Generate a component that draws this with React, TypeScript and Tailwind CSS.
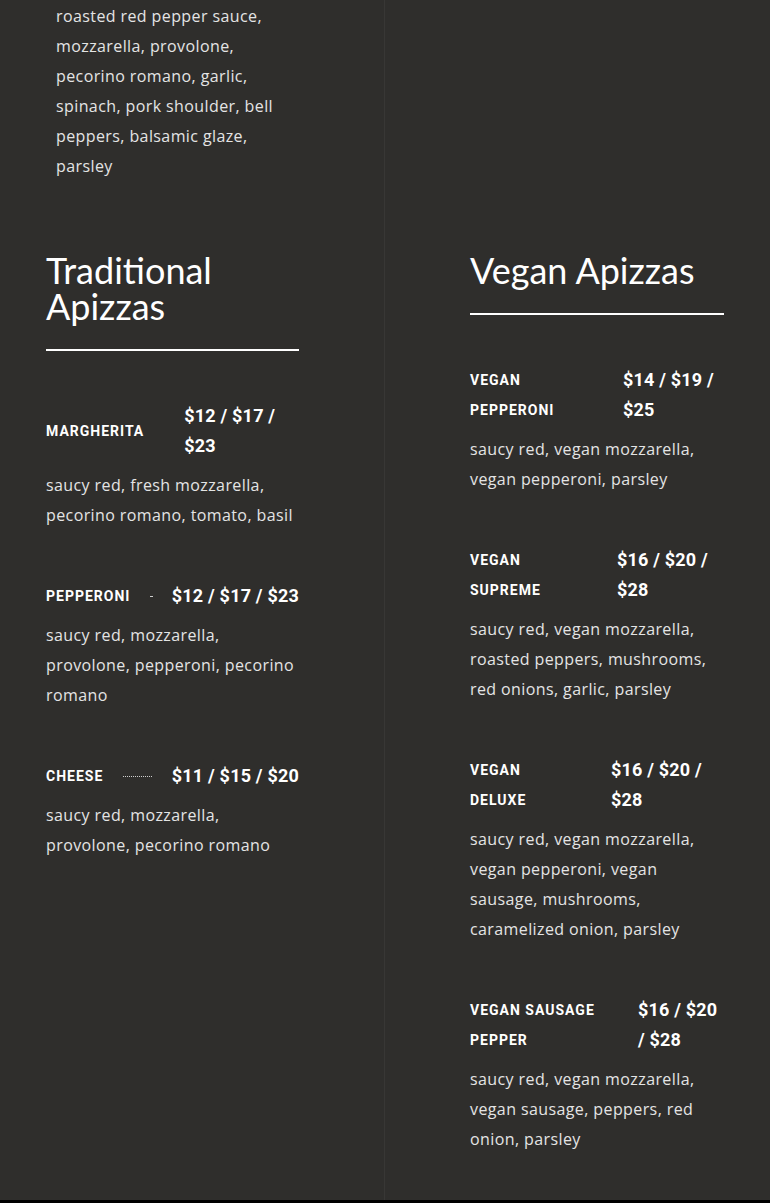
import React from "react";

type Item = {
  name: React.ReactNode;
  nameClass: string;
  price: React.ReactNode;
  sep: boolean;
  desc: string[];
};

const traditional: Item[] = [
  {
    name: "MARGHERITA",
    nameClass: "shrink-0",
    price: (
      <>
        $12 / $17 /<br />$23
      </>
    ),
    sep: false,
    desc: ["saucy red, fresh mozzarella,", "pecorino romano, tomato, basil"],
  },
  {
    name: "PEPPERONI",
    nameClass: "shrink-0",
    price: "$12 / $17 / $23",
    sep: true,
    desc: ["saucy red, mozzarella,", "provolone, pepperoni, pecorino", "romano"],
  },
  {
    name: "CHEESE",
    nameClass: "shrink-0",
    price: "$11 / $15 / $20",
    sep: true,
    desc: ["saucy red, mozzarella,", "provolone, pecorino romano"],
  },
];

const vegan: Item[] = [
  {
    name: (
      <>
        VEGAN
        <br />
        PEPPERONI
      </>
    ),
    nameClass: "w-[113px] shrink-0",
    price: (
      <>
        $14 / $19 /<br />$25
      </>
    ),
    sep: false,
    desc: ["saucy red, vegan mozzarella,", "vegan pepperoni, parsley"],
  },
  {
    name: (
      <>
        VEGAN
        <br />
        SUPREME
      </>
    ),
    nameClass: "w-[107px] shrink-0",
    price: (
      <>
        $16 / $20 /<br />$28
      </>
    ),
    sep: false,
    desc: [
      "saucy red, vegan mozzarella,",
      "roasted peppers, mushrooms,",
      "red onions, garlic, parsley",
    ],
  },
  {
    name: (
      <>
        VEGAN
        <br />
        DELUXE
      </>
    ),
    nameClass: "w-[101px] shrink-0",
    price: (
      <>
        $16 / $20 /<br />$28
      </>
    ),
    sep: false,
    desc: [
      "saucy red, vegan mozzarella,",
      "vegan pepperoni, vegan",
      "sausage, mushrooms,",
      "caramelized onion, parsley",
    ],
  },
  {
    name: (
      <>
        VEGAN SAUSAGE
        <br />
        PEPPER
      </>
    ),
    nameClass: "w-[128px] shrink-0",
    price: (
      <>
        $16 / $20
        <br />/ $28
      </>
    ),
    sep: false,
    desc: [
      "saucy red, vegan mozzarella,",
      "vegan sausage, peppers, red",
      "onion, parsley",
    ],
  },
];

const descFont = {
  fontFamily: '"Open Sans", "Noto Sans", sans-serif',
};

function Desc({ lines, className = "" }: { lines: string[]; className?: string }) {
  return (
    <p
      className={`text-[16px] leading-[30px] tracking-[0.4px] text-[#e4e4e4] whitespace-nowrap ${className}`}
      style={descFont}
    >
      {lines.map((l, i) => (
        <React.Fragment key={i}>
          {l}
          {i < lines.length - 1 && <br />}
        </React.Fragment>
      ))}
    </p>
  );
}

function MenuItem({ item }: { item: Item }) {
  return (
    <div className="mt-[51px] first:mt-0">
      <div className="flex items-center font-['Roboto',sans-serif] text-white">
        <div
          className={`text-[14px] leading-[30px] font-bold tracking-[1px] whitespace-nowrap ${item.nameClass}`}
        >
          {item.name}
        </div>
        {item.sep ? (
          <div className="flex-1 mx-5 h-0 min-w-0">
            <div className="border-b border-dotted border-[#cfcfcf]" />
          </div>
        ) : (
          <div className="w-0 mx-5 shrink-0" />
        )}
        <div
          className={`text-[18px] leading-[30px] font-bold tracking-[0.2px] whitespace-nowrap ${
            item.sep ? "shrink-0" : "flex-1 min-w-0"
          }`}
        >
          {item.price}
        </div>
      </div>
      <Desc lines={item.desc} className="mt-[9px]" />
    </div>
  );
}

function Heading({ children }: { children: React.ReactNode }) {
  return (
    <h2
      className="text-[36px] leading-[36px] text-white pb-[25px] border-b-2 border-white"
      style={{ fontFamily: 'Lato, "Open Sans", sans-serif' }}
    >
      {children}
    </h2>
  );
}

export default function App() {
  return (
    <div className="bg-black min-h-[1203px]">
      <div className="bg-[#2f2e2c] h-[1200px] grid grid-cols-2 overflow-hidden">
        <div className="border-r border-[#383735] pl-[46px] pr-[85px]">
          <Desc
            className="pl-[10px] pt-[1px]"
            lines={[
              "roasted red pepper sauce,",
              "mozzarella, provolone,",
              "pecorino romano, garlic,",
              "spinach, pork shoulder, bell",
              "peppers, balsamic glaze,",
              "parsley",
            ]}
          />
          <div className="mt-[71px]">
            <Heading>
              Traditional
              <br />
              Apizzas
            </Heading>
            <div className="mt-[50px]">
              {traditional.map((it, i) => (
                <MenuItem key={i} item={it} />
              ))}
            </div>
          </div>
        </div>
        <div className="pl-[85px] pr-[46px] pt-[252px]">
          <Heading>Vegan Apizzas</Heading>
          <div className="mt-[50px]">
            {vegan.map((it, i) => (
              <MenuItem key={i} item={it} />
            ))}
          </div>
        </div>
      </div>
    </div>
  );
}
